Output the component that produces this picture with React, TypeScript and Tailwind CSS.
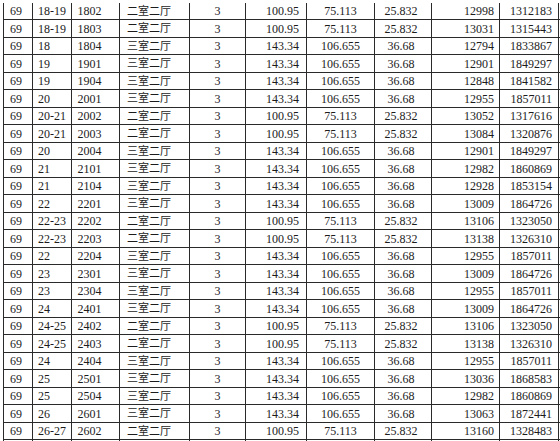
import React from "react";

type Row = [string, string, string, string, string, string, string, string, string, string];

const rows: Row[] = [
  ["69", "18-19", "1802", "二室二厅", "3", "100.95", "75.113", "25.832", "12998", "1312183"],
  ["69", "18-19", "1803", "二室二厅", "3", "100.95", "75.113", "25.832", "13031", "1315443"],
  ["69", "18", "1804", "三室二厅", "3", "143.34", "106.655", "36.68", "12794", "1833867"],
  ["69", "19", "1901", "三室二厅", "3", "143.34", "106.655", "36.68", "12901", "1849297"],
  ["69", "19", "1904", "三室二厅", "3", "143.34", "106.655", "36.68", "12848", "1841582"],
  ["69", "20", "2001", "三室二厅", "3", "143.34", "106.655", "36.68", "12955", "1857011"],
  ["69", "20-21", "2002", "二室二厅", "3", "100.95", "75.113", "25.832", "13052", "1317616"],
  ["69", "20-21", "2003", "二室二厅", "3", "100.95", "75.113", "25.832", "13084", "1320876"],
  ["69", "20", "2004", "三室二厅", "3", "143.34", "106.655", "36.68", "12901", "1849297"],
  ["69", "21", "2101", "三室二厅", "3", "143.34", "106.655", "36.68", "12982", "1860869"],
  ["69", "21", "2104", "三室二厅", "3", "143.34", "106.655", "36.68", "12928", "1853154"],
  ["69", "22", "2201", "三室二厅", "3", "143.34", "106.655", "36.68", "13009", "1864726"],
  ["69", "22-23", "2202", "二室二厅", "3", "100.95", "75.113", "25.832", "13106", "1323050"],
  ["69", "22-23", "2203", "二室二厅", "3", "100.95", "75.113", "25.832", "13138", "1326310"],
  ["69", "22", "2204", "三室二厅", "3", "143.34", "106.655", "36.68", "12955", "1857011"],
  ["69", "23", "2301", "三室二厅", "3", "143.34", "106.655", "36.68", "13009", "1864726"],
  ["69", "23", "2304", "三室二厅", "3", "143.34", "106.655", "36.68", "12955", "1857011"],
  ["69", "24", "2401", "三室二厅", "3", "143.34", "106.655", "36.68", "13009", "1864726"],
  ["69", "24-25", "2402", "二室二厅", "3", "100.95", "75.113", "25.832", "13106", "1323050"],
  ["69", "24-25", "2403", "二室二厅", "3", "100.95", "75.113", "25.832", "13138", "1326310"],
  ["69", "24", "2404", "三室二厅", "3", "143.34", "106.655", "36.68", "12955", "1857011"],
  ["69", "25", "2501", "三室二厅", "3", "143.34", "106.655", "36.68", "13036", "1868583"],
  ["69", "25", "2504", "三室二厅", "3", "143.34", "106.655", "36.68", "12982", "1860869"],
  ["69", "26", "2601", "三室二厅", "3", "143.34", "106.655", "36.68", "13063", "1872441"],
  ["69", "26-27", "2602", "二室二厅", "3", "100.95", "75.113", "25.832", "13160", "1328483"],
];

const cols: string[] = [
  "w-[29px] justify-start pl-[6px]",
  "w-[38.5px] justify-start pl-[5px]",
  "w-[48.5px] justify-start pl-[6px]",
  "w-[70px] justify-start pl-[7px] text-[11px]",
  "w-[56px] justify-center",
  "w-[61px] justify-end pr-[7px]",
  "w-[68px] justify-center",
  "w-[57px] justify-center pr-[4px]",
  "w-[68px] justify-end pr-[5px]",
  "w-[60px] justify-end pr-[6px] border-r",
];

export default function App() {
  return (
    <div
      className="w-[560px] h-[441px] overflow-hidden bg-white pt-[2.5px] text-[12px] text-[#1c1c1c]"
      style={{ fontFamily: '"Liberation Serif", "Noto Sans CJK SC", serif' }}
    >
      <div className="ml-[3px] flex flex-col">
        {rows.map((r, i) => (
          <div key={i} className="flex h-[17.5px] shrink-0 border-b border-[#2a2a2a]">
            {r.map((c, j) => (
              <div
                key={j}
                className={`flex items-center pt-[1px] leading-none whitespace-nowrap border-l border-[#2a2a2a] ${cols[j]}`}
              >
                {c}
              </div>
            ))}
          </div>
        ))}
        <div className="flex h-[17.5px] shrink-0">
          {cols.map((c, j) => (
            <div key={j} className={`flex border-l border-[#2a2a2a] ${c}`} />
          ))}
        </div>
      </div>
    </div>
  );
}
